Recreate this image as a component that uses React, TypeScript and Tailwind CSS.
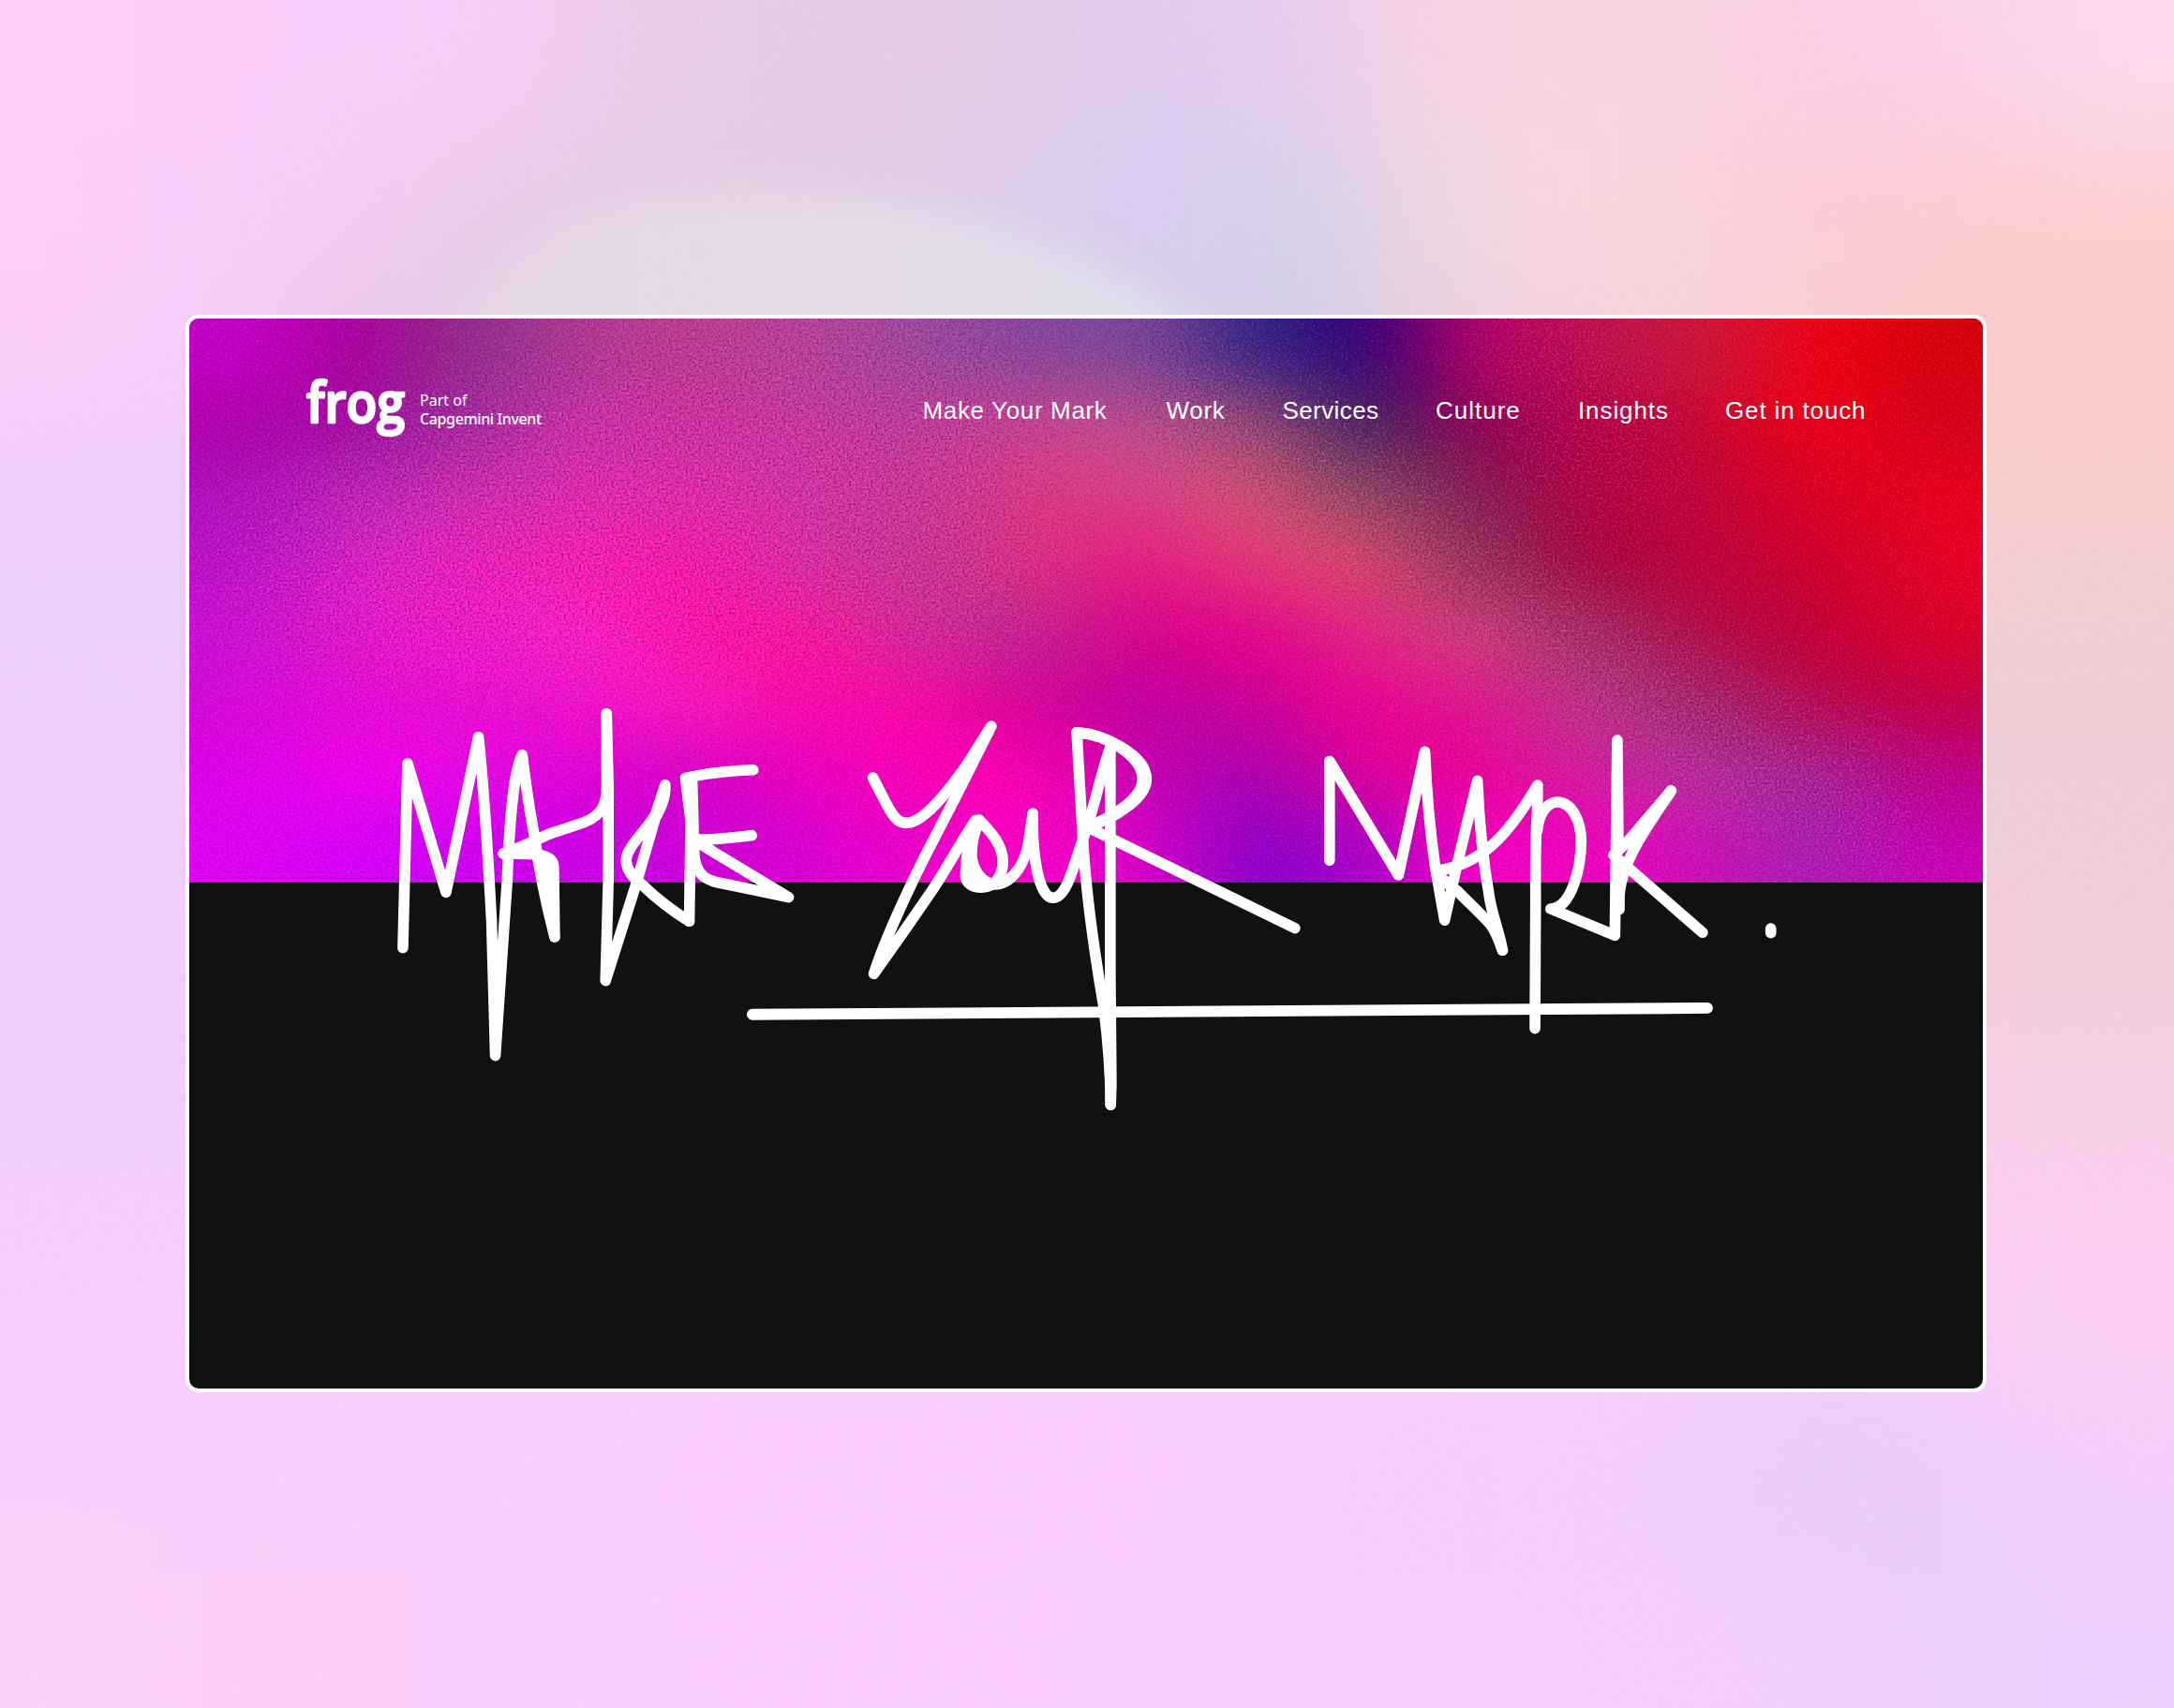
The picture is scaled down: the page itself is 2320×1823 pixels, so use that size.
const heroColors: string[][] = [
  ['#c400c8', '#ac009c', '#8c3088', '#b03a94', '#c03c90', '#b8449a', '#9c4a9c', '#84489c', '#7c4898', '#2c2484', '#300078', '#b80068', '#c0104c', '#cc1838', '#f20010', '#d80008'],
  ['#b000ac', '#9c0ca0', '#a42ca0', '#d030a8', '#d430a0', '#cc38a0', '#c43c9c', '#cc4490', '#c0508c', '#985070', '#38245c', '#900054', '#b80044', '#c80830', '#f00010', '#d80018'],
  ['#b010c0', '#c028b8', '#d42cb4', '#e42cb4', '#e42ca8', '#d834a4', '#cc3898', '#e03880', '#dc4088', '#d85470', '#8c5060', '#801c50', '#b80040', '#c00438', '#e00020', '#e80018'],
  ['#c010cc', '#e020c8', '#f020bc', '#ff1cb4', '#ff14ac', '#dc30a4', '#cc3494', '#e03080', '#e81884', '#e83878', '#e04c68', '#8c385c', '#a8003c', '#c00438', '#cc002c', '#e80024'],
  ['#cc10d4', '#e818cc', '#f418cc', '#ff24c8', '#ff10ac', '#ff1498', '#d42c98', '#c02490', '#dc008c', '#e4008c', '#e42484', '#d44478', '#a03464', '#b40848', '#c40034', '#dc0028'],
  ['#d808dc', '#e808d8', '#ec0cd4', '#f010cc', '#f81cbc', '#ff08ac', '#ff04ac', '#d80098', '#c000a4', '#cc0098', '#f00094', '#e01490', '#c03888', '#a02c6c', '#b80850', '#c40048'],
  ['#e000ec', '#f400f0', '#e808e8', '#e400d8', '#d800c8', '#e800c0', '#ff00b8', '#ff00b0', '#c800b4', '#a400b4', '#e00098', '#f0009c', '#d41ca0', '#b830a0', '#a42898', '#c0008c'],
  ['#e000f4', '#d400fc', '#d000f4', '#cc00e8', '#cc00dc', '#dc00d4', '#ec00cc', '#ff00c8', '#dc00c8', '#8800cc', '#a800cc', '#f800c4', '#f400c0', '#cc10b8', '#a820b4', '#cc00b8'],
];

const side = (left: string, right: string): string[] =>
  Array.from({ length: 16 }, (_, i) => (i < 8 ? left : right));

const pageColors: string[][] = [
  ['#fdccf8', '#fccbf8', '#faccf9', '#f8cbf8', '#eccbe9', '#e5cbe2', '#e3cbe1', '#e0cbe5', '#decbf0', '#e6ccee', '#f6d0e4', '#f8d3e0', '#fad0e0', '#fbcce6', '#fcd0ec', '#fbdaf0'],
  ['#fdccf8', '#faccf9', '#f4caf5', '#e9cbe6', '#e4cce4', '#e2cce2', '#e0cce4', '#dccbec', '#d9caf0', '#d2cfe8', '#ead6e2', '#f8d6de', '#fad0d8', '#fccad2', '#fdcacc', '#fccccc'],
  ['#fcccf8', '#f4ccf8', '#eac8e6', '#e0cce4', '#e4cce4', '#e2cce4', '#dfcce8', '#dccaea', '#d6cce8', '#d0cbe4', '#e8cce0', '#f4cedc', '#f8d0d8', '#f8cdd0', '#fbcac8', '#fbcbc8'],
  side('#ecccfa', '#f8cccc'),
  side('#ebccfb', '#f0ccd2'),
  side('#eeccfc', '#eeccd6'),
  side('#f0ccfd', '#f2ccd8'),
  side('#eeccfd', '#f6cce2'),
  side('#f2ccfd', '#fbccee'),
  ['#f6ccfc', '#f8ccfc', '#fbccfb', '#fbccfb', '#fbccfb', '#fbccfb', '#fbccfb', '#fbccfb', '#fbccfb', '#f8ccfb', '#f8ccfb', '#f8ccfb', '#f2ccfa', '#eeccf8', '#f8ccf4', '#fcccf2'],
  ['#fbccfa', '#fbccfa', '#fbccfa', '#fbccfa', '#fbccfa', '#fbcbfb', '#fbcbfb', '#fbcbfb', '#fbcbfb', '#f8cbfb', '#f4cbfb', '#f2ccfc', '#eeccfc', '#e8cafc', '#eaccfc', '#f0ccfc'],
  ['#fcd0f8', '#fcccf8', '#fcccf9', '#fbccfa', '#fbccfa', '#fbcbfb', '#fbcbfb', '#fbcbfb', '#f9cbfb', '#f8ccfc', '#f6ccfc', '#f5ccfc', '#f2ccfd', '#f0ccfe', '#eaccfe', '#ecccff'],
];

type MeshProps = { id: string; colors: string[][]; width: number; height: number; className: string };

/* Soft colour field: a coarse grid of swatches melted together by a blur. */
function Mesh({ id, colors, width, height, className }: MeshProps) {
  const rows = colors.length;
  const cols = colors[0].length;
  const w = width / cols;
  const h = height / rows;
  return (
    <svg className={className} viewBox={`0 0 ${width} ${height}`} preserveAspectRatio="none" aria-hidden="true">
      <defs>
        <filter
          id={id}
          filterUnits="userSpaceOnUse"
          x={-w * 2}
          y={-h * 2}
          width={width + w * 4}
          height={height + h * 4}
          colorInterpolationFilters="sRGB"
        >
          <feGaussianBlur stdDeviation={`${w * 0.44} ${h * 0.46}`} />
        </filter>
      </defs>
      <g filter={`url(#${id})`} shapeRendering="crispEdges">
        {colors.map((row, r) =>
          row.map((fill, c) => {
            const left = c === 0 ? -2 * w : c * w;
            const right = c === cols - 1 ? width + 2 * w : (c + 1) * w;
            const top = r === 0 ? -2 * h : r * h;
            const bottom = r === rows - 1 ? height + 2 * h : (r + 1) * h;
            return <rect key={`${r}-${c}`} x={left} y={top} width={right - left + 1} height={bottom - top + 1} fill={fill} />;
          }),
        )}
      </g>
    </svg>
  );
}

/* Film grain, heavier along the lighter bands of the hero. */
function HeroGrain() {
  return (
    <svg className="absolute inset-0 size-full" viewBox="0 0 1914 602" preserveAspectRatio="none" aria-hidden="true">
      <defs>
        <filter id="noise-light" x="0" y="0" width="100%" height="100%" colorInterpolationFilters="sRGB">
          <feTurbulence type="fractalNoise" baseFrequency="0.43" numOctaves="2" seed="4" />
          <feColorMatrix values="0 0 0 0 1  0 0 0 0 0.5  0 0 0 0 0.9  2.2 0 0 0 -1.12" />
        </filter>
        <filter id="noise-dark" x="0" y="0" width="100%" height="100%" colorInterpolationFilters="sRGB">
          <feTurbulence type="fractalNoise" baseFrequency="0.43" numOctaves="2" seed="4" />
          <feColorMatrix values="0 0 0 0 0.25  0 0 0 0 0  0 0 0 0 0.3  -2.4 0 0 0 1.18" />
        </filter>
        <filter id="soft" x="-30%" y="-60%" width="160%" height="220%">
          <feGaussianBlur stdDeviation="45" />
        </filter>
        <mask id="grain-mask" maskUnits="userSpaceOnUse" x="0" y="0" width="1914" height="602">
          <rect width="1914" height="602" fill="#5c5c5c" />
          <g filter="url(#soft)" fill="none" stroke="#fff">
            <path d="M60 320 C300 100 560 50 900 110" strokeWidth="190" />
            <path d="M180 290 L900 260" strokeWidth="190" />
            <path d="M1000 60 C1330 160 1450 400 1850 540" strokeWidth="130" />
            <path d="M1400 40 L1560 180" strokeWidth="120" />
          </g>
        </mask>
      </defs>
      <g mask="url(#grain-mask)">
        <rect width="1914" height="602" filter="url(#noise-light)" opacity="0.6" />
        <rect width="1914" height="602" filter="url(#noise-dark)" opacity="0.6" />
      </g>
    </svg>
  );
}

/* Pale dome rising behind the card, plus a faint grain. */
function PageTexture() {
  return (
    <svg className="absolute inset-0 size-full" viewBox="0 0 2320 1823" aria-hidden="true">
      <defs>
        <filter id="dome-blur" x="-20%" y="-20%" width="140%" height="140%" colorInterpolationFilters="sRGB">
          <feGaussianBlur stdDeviation="20" />
        </filter>
        <filter id="page-light" x="0" y="0" width="100%" height="100%" colorInterpolationFilters="sRGB">
          <feTurbulence type="fractalNoise" baseFrequency="0.4" numOctaves="2" seed="9" />
          <feColorMatrix values="0 0 0 0 1  0 0 0 0 1  0 0 0 0 1  2 0 0 0 -1" />
        </filter>
        <linearGradient id="dome" x1="0" x2="1" y1="0" y2="0">
          <stop offset="0" stopColor="#e4d4e5" />
          <stop offset="0.5" stopColor="#e6d9e8" />
          <stop offset="1" stopColor="#dadeea" />
        </linearGradient>
      </defs>
      <path
        d="M450 420 C500 260 620 208 760 205 C1000 205 1210 250 1350 420 Z"
        fill="url(#dome)"
        filter="url(#dome-blur)"
      />
      <rect width="2320" height="1823" filter="url(#page-light)" opacity="0.22" />
    </svg>
  );
}

const word1 = [
  'M90 815 L105 225 L228 637 L332 140 C352 330 365 560 374 730 L386 1160 L424 600 C430 450 440 260 472 197 C485 300 500 400 512 460 C525 560 550 680 576 780',
  'M576 780 L573 560 C573 515 530 513 412 513',
  'M412 513 C470 495 520 466 560 450 L670 413 C730 390 743 350 743 300 L742 65',
  'M742 65 L748 300 L748 600 L739 920 L834 620 L898 400 C925 350 930 330 930 293 L900 385 C880 430 805 490 805 535 C806 575 840 600 855 612 C900 655 950 695 1007 730',
  'M1007 730 L1012 410 L995 272 C1060 255 1140 248 1212 245',
  'M1016 272 L1022 500 C1023 600 1080 602 1130 612 L1325 653 L1050 487',
  'M1030 468 C1100 470 1150 460 1207 455',
];

const word2 = [
  'M150 270 L190 350 C215 400 230 417 258 415 C310 410 390 307 450 215 L517 105 L420 305 L310 525 C250 650 190 780 153 898 L241 770 L328 640 C380 560 420 480 468 407',
  'M470 410 C450 460 438 520 437 580 C437 610 460 622 487 622 C530 622 553 580 553 540 C553 480 510 440 480 405 C468 440 455 470 456 520 C460 570 490 608 530 612 C590 608 625 530 632 480 L646 385',
  'M646 385 C643 500 660 652 708 655 C750 655 770 560 800 470 C834 380 850 280 885 175',
  'M886 170 L886 900 L889 1250 L887 1318',
  'M782 125 L800 450 C810 650 840 850 865 1000 C880 1120 887 1200 887 1318',
  'M782 125 C870 130 998 200 998 275 C998 335 900 400 815 428 L1458 752',
  'M782 125 C870 130 986 200 986 275 C986 335 900 392 815 428',
  'M452 560 C460 590 475 605 500 612',
];

const word3 = [
  'M109 475 L109 157 L315 522 L394 127 C400 280 412 400 424 490 L453 667 L490 490 L551 220 C556 350 568 480 588 600 C598 660 618 710 626 763',
  'M430 512 C450 540 470 560 490 572 C520 605 570 655 590 680 C605 700 615 730 626 763',
  'M428 508 C560 490 640 400 731 234 L730 320 C724 400 724 460 725 600 L723 1013',
  'M730 380 C735 310 770 288 790 288 C835 290 861 350 861 415 C861 490 835 628 770 630 L962 715 L969 90 L972 400',
  'M1130 252 L1000 415 L958 458 L1224 706',
  'M1130 252 C1070 350 975 480 975 600 L975 632',
  'M1428 693 L1428 707',
];

/* Hand-drawn marker strokes spanning the colour and black halves. */
function Scrawl() {
  const pen = { vectorEffect: 'non-scaling-stroke' as const };
  return (
    <svg
      className="pointer-events-none absolute inset-0 size-full"
      viewBox="202 340 1914 1142"
      fill="none"
      stroke="#fff"
      strokeWidth="11.6"
      strokeLinecap="round"
      strokeLinejoin="round"
      role="img"
      aria-label="Make your mark."
    >
      <g transform="translate(400 740) scale(0.33333)">
        {word1.map((d) => (
          <path key={d} d={d} {...pen} />
        ))}
        <path d="M512 500 L573 530 L576 780 Z" fill="#fff" stroke="none" />
      </g>
      <g transform="translate(880 740) scale(0.34439 0.33333)">
        {word2.map((d) => (
          <path key={d} d={d} {...pen} />
        ))}
      </g>
      <g transform="translate(1380.2 760) scale(0.35714 0.33333)">
        {word3.map((d) => (
          <path key={d} d={d} {...pen} />
        ))}
        <path d="M1125 260 L1000 410 L1005 480 L1040 400 Z" fill="#fff" stroke="none" />
      </g>
      <path d="M803 1082.8 L1822.5 1076" strokeWidth="11.8" />
    </svg>
  );
}

function Logo() {
  return (
    <a className="flex items-start text-white">
      <svg className="h-[80px] w-[121px] overflow-visible" viewBox="0 0 121 80" aria-label="frog">
        <text
          x="0"
          y="51"
          textLength="105"
          lengthAdjust="spacingAndGlyphs"
          fill="#fff"
          stroke="#fff"
          strokeWidth="2.6"
          strokeLinejoin="round"
          className="font-['Open_Sans'] text-[59px] font-semibold"
        >
          frog
        </text>
      </svg>
      <span className="flex flex-col pt-[17px] font-['Noto_Sans',sans-serif] text-[16px] leading-[20px] whitespace-nowrap">
        <span>Part of</span>
        <span className="font-medium tracking-[-0.38px]">Capgemini Invent</span>
      </span>
    </a>
  );
}

const links = [
  { label: 'Make Your Mark', cls: 'w-[260px] tracking-[0.65px]' },
  { label: 'Work', cls: 'w-[124px] tracking-[0.7px]' },
  { label: 'Services', cls: 'w-[163.5px] tracking-[0.4px]' },
  { label: 'Culture', cls: 'w-[152px] tracking-[1px]' },
  { label: 'Insights', cls: 'w-[157px] tracking-[0.9px]' },
  { label: 'Get in touch', cls: 'tracking-[0.85px]' },
];

export default function App() {
  return (
    <main className="relative isolate h-[1823px] w-[2320px] overflow-hidden bg-[#fbccfb] pt-[336px] pl-[198px]">
      <div className="absolute inset-0 -z-10">
        <Mesh id="page-blur" colors={pageColors} width={2320} height={1823} className="size-full" />
        <PageTexture />
      </div>
      <div className="h-[1150px] w-[1922px] rounded-[14px] bg-white p-[4px] pr-[4.5px]">
        <div className="relative flex size-full flex-col overflow-hidden rounded-[10px] bg-[#111]">
          <section className="relative isolate h-[602px] overflow-hidden">
            <div className="absolute inset-0 -z-10 isolate">
              <Mesh id="hero-blur" colors={heroColors} width={1914} height={602} className="size-full" />
              <HeroGrain />
            </div>
            <header className="flex items-start pt-[60px] pl-[125px]">
              <Logo />
              <nav className="ml-auto flex w-[1131px] pt-[23px] font-['Liberation_Sans',sans-serif] text-[26px] leading-[30px] whitespace-nowrap text-white">
                {links.map((l) => (
                  <a key={l.label} className={l.cls}>
                    {l.label}
                  </a>
                ))}
              </nav>
            </header>
          </section>
          <Scrawl />
        </div>
      </div>
    </main>
  );
}
